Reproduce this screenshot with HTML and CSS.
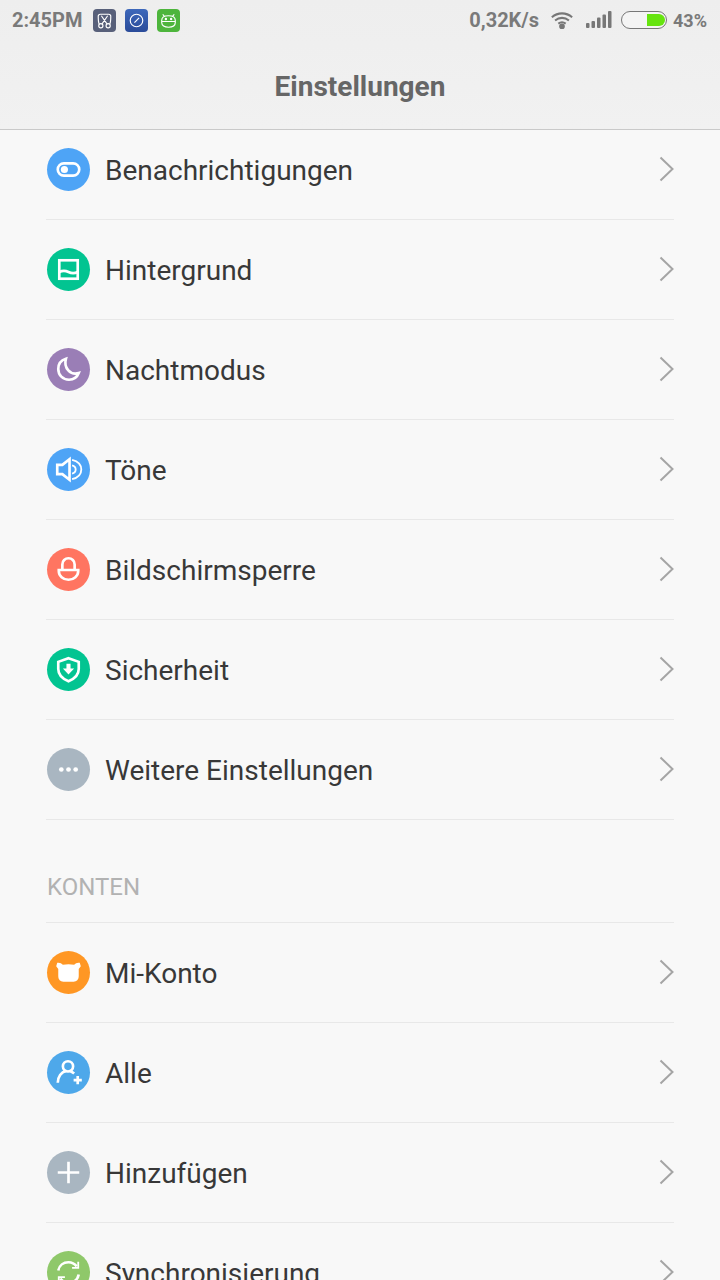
FILE: index.html

```html
<!DOCTYPE html>
<html lang="de">
<head>
    <meta charset="UTF-8">
    <meta name="viewport" content="width=device-width, initial-scale=1.0">
    <title>Einstellungen</title>
    <link rel="stylesheet" href="styles.css">
</head>
<body>
    <div class="top">
        <div class="status">
            <span class="time">2:45PM</span>
            <span class="app app-grey">
                <svg viewBox="0 0 22 22"><path d="M6 14.500C5 13 5 10 5 7c0-1.200.8-2 2-2h8c1.200 0 2 .8 2 2 0 3 0 6-1 7.500M8 6.500l5.500 8M14 6.500l-5.500 8"/><circle cx="7.500" cy="16" r="2"/><circle cx="14.500" cy="16" r="2"/></svg>
            </span>
            <span class="app app-blue">
                <svg viewBox="0 0 22 22"><circle cx="11" cy="11" r="6"/><path d="M9 13l4.500-4.500"/></svg>
            </span>
            <span class="app app-green">
                <svg viewBox="0 0 22 22"><path d="M5.500 5l1.500 2M16.500 5l-1.500 2M4.500 11c0-2.800 2.500-4.500 6.500-4.500s6.500 1.700 6.500 4.500v2c0 2.800-2.500 4.500-6.500 4.500s-6.500-1.700-6.500-4.500zM4.500 12h13"/><circle cx="8.500" cy="9.500" r=".6"/><circle cx="13.500" cy="9.500" r=".6"/></svg>
            </span>
            <span class="status-right">
                <span class="speed">0,32K/s</span>
                <svg class="wifi" viewBox="0 0 26 20"><path d="M2 7.500c6.500-5.500 15.500-5.500 22 0M5.500 11c4.500-3.700 10.500-3.700 15 0M9 14.500c2.500-1.800 5.500-1.800 8 0"/><circle cx="13" cy="17.500" r="2"/></svg>
                <svg class="signal" viewBox="0 0 26 17"><rect x="0" y="12" width="3.500" height="5" rx="1"/><rect x="5.500" y="10" width="3.500" height="7" rx="1"/><rect x="11" y="6.500" width="3.500" height="10.500" rx="1"/><rect x="16.500" y="3.500" width="3.500" height="13.500" rx="1"/><rect x="22" y="0" width="3.500" height="17" rx="1"/></svg>
                <span class="battery"><span class="battery-fill"></span></span>
                <span class="percent">43%</span>
            </span>
        </div>
        <h1 class="title">Einstellungen</h1>
    </div>

    <div class="list">
        <div class="row">
            <span class="icon c-blue">
                <svg viewBox="0 0 42 42"><rect x="10.500" y="15" width="21" height="12" rx="6" class="thick"/><circle cx="17" cy="21" r="3.500" class="solid"/></svg>
            </span>
            <span class="label">Benachrichtigungen</span>
            <svg class="chevron" viewBox="0 0 15 26"><path d="M1.500 1.500L13.500 13 1.500 24.500"/></svg>
        </div>
        <div class="row">
            <span class="icon c-green">
                <svg viewBox="0 0 42 42"><rect x="12" y="12" width="18" height="18" class="thick"/><path d="M12 23.500c3-1.500 6-1.500 9 0s6 1.500 9 0" class="thick"/></svg>
            </span>
            <span class="label">Hintergrund</span>
            <svg class="chevron" viewBox="0 0 15 26"><path d="M1.500 1.500L13.500 13 1.500 24.500"/></svg>
        </div>
        <div class="row">
            <span class="icon c-purple">
                <svg viewBox="0 0 42 42"><path d="M18.500 10.500C13.500 12 11 16 11 20.500c0 6 4.500 10.500 10.500 10.500 4.500 0 8-2.500 9.500-6.500-8 2.500-15-5-12.500-14z" class="thick"/></svg>
            </span>
            <span class="label">Nachtmodus</span>
            <svg class="chevron" viewBox="0 0 15 26"><path d="M1.500 1.500L13.500 13 1.500 24.500"/></svg>
        </div>
        <div class="row">
            <span class="icon c-blue">
                <svg viewBox="0 0 42 42"><path d="M10 16.500h5l7-5.500v20l-7-5.500h-5z" class="thick"/><path d="M24.500 11.500c6 1.500 9 5.500 9 9.500s-3 8-9 9.500M24.500 17c2 .5 3.500 2 3.500 4s-1.500 3.500-3.500 4" class="thin"/></svg>
            </span>
            <span class="label">Töne</span>
            <svg class="chevron" viewBox="0 0 15 26"><path d="M1.500 1.500L13.500 13 1.500 24.500"/></svg>
        </div>
        <div class="row">
            <span class="icon c-red">
                <svg viewBox="0 0 42 42"><path d="M15 21v-5a6 6 0 0 1 12 0v5" class="thick"/><path d="M11.500 21.500h19v1a9.500 8.500 0 0 1-19 0z" class="thick"/></svg>
            </span>
            <span class="label">Bildschirmsperre</span>
            <svg class="chevron" viewBox="0 0 15 26"><path d="M1.500 1.500L13.500 13 1.500 24.500"/></svg>
        </div>
        <div class="row">
            <span class="icon c-green">
                <svg viewBox="0 0 42 42"><path d="M21 10l10 3.500v7c0 5.500-4 9.500-10 12-6-2.500-10-6.500-10-12v-7z" class="thick"/><path d="M19 15.500h4v4.500h3.500L21 26l-5.500-6H19z" class="solid"/></svg>
            </span>
            <span class="label">Sicherheit</span>
            <svg class="chevron" viewBox="0 0 15 26"><path d="M1.500 1.500L13.500 13 1.500 24.500"/></svg>
        </div>
        <div class="row">
            <span class="icon c-grey">
                <svg viewBox="0 0 42 42"><circle cx="14" cy="21" r="2.300" class="solid"/><circle cx="21" cy="21" r="2.300" class="solid"/><circle cx="28" cy="21" r="2.300" class="solid"/></svg>
            </span>
            <span class="label">Weitere Einstellungen</span>
            <svg class="chevron" viewBox="0 0 15 26"><path d="M1.500 1.500L13.500 13 1.500 24.500"/></svg>
        </div>

        <div class="section">KONTEN</div>

        <div class="row">
            <span class="icon c-orange">
                <svg viewBox="0 0 42 42"><path d="M10 11.500c2.500-.5 4 .5 5.500 2 3.500-.7 7.500-.7 11 0 1.500-1.500 3-2.500 5.500-2l1 3.500-2 2.500v7c0 3.500-2 5.500-5 5.500H16c-3 0-5-2-5-5.500v-7l-2-2.500z" class="solid"/></svg>
            </span>
            <span class="label">Mi-Konto</span>
            <svg class="chevron" viewBox="0 0 15 26"><path d="M1.500 1.500L13.500 13 1.500 24.500"/></svg>
        </div>
        <div class="row">
            <span class="icon c-sky">
                <svg viewBox="0 0 42 42"><circle cx="20.500" cy="15" r="5" class="thick"/><path d="M10.500 31c0-6 3.500-10.500 8-11.500M23 20c1.500.5 2.500 1 3.500 2" class="thick"/><path d="M26 28.500h8M30 24.500v8" class="thick"/></svg>
            </span>
            <span class="label">Alle</span>
            <svg class="chevron" viewBox="0 0 15 26"><path d="M1.500 1.500L13.500 13 1.500 24.500"/></svg>
        </div>
        <div class="row">
            <span class="icon c-grey">
                <svg viewBox="0 0 42 42"><path d="M10.500 21h21M21 10.500v21" class="thick"/></svg>
            </span>
            <span class="label">Hinzufügen</span>
            <svg class="chevron" viewBox="0 0 15 26"><path d="M1.500 1.500L13.500 13 1.500 24.500"/></svg>
        </div>
        <div class="row">
            <span class="icon c-lime">
                <svg viewBox="0 0 42 42"><path d="M11 19c1-5 5-8 10-8 3 0 6 1.500 8 4M31 23c-1 5-5 8-10 8-3 0-6-1.500-8-4" class="thick"/><path d="M30.500 10.500v6h-6M11.500 31.500v-6h6" class="thin"/></svg>
            </span>
            <span class="label">Synchronisierung</span>
            <svg class="chevron" viewBox="0 0 15 26"><path d="M1.500 1.500L13.500 13 1.500 24.500"/></svg>
        </div>
    </div>
</body>
</html>
```

FILE: styles.css

```css
* {
    margin: 0;
    padding: 0;
    box-sizing: border-box;
}
html, body {
    height: 1280px;
    overflow: hidden;
}
body {
    background: #f8f8f8;
    font-family: Roboto, sans-serif;
}

/* header */
.top {
    position: relative;
    z-index: 2;
    height: 130px;
    background: linear-gradient(#eeeeee, #f1f1f1);
    border-bottom: 1px solid #c9c9c9;
}
.status {
    display: flex;
    align-items: center;
    height: 40px;
    padding: 0 12px;
    color: #7a7a7a;
    font-size: 20px;
    font-weight: 700;
}
.time {
    width: 81px;
}
.app {
    display: flex;
    width: 23px;
    height: 23px;
    margin-right: 9px;
    border-radius: 4px;
}
.app svg {
    width: 23px;
    height: 23px;
    fill: none;
    stroke: #fff;
    stroke-width: 1.1;
}
.app-grey { background: #58607a; }
.app-blue { background: linear-gradient(#3d68bb, #2a4b99); }
.app-green { background: #4db53c; }
.status-right {
    display: flex;
    align-items: center;
    margin-left: auto;
}
.speed {
    margin-right: 11px;
}
.wifi {
    width: 24px;
    height: 19px;
    margin-right: 12px;
    margin-bottom: 2px;
    fill: #777;
    stroke: #777;
    stroke-width: 2.200;
}
.wifi path {
    fill: none;
}
.signal {
    width: 26px;
    height: 17px;
    margin-right: 9px;
    margin-bottom: 1px;
    fill: #777;
}
.battery {
    display: flex;
    justify-content: flex-end;
    width: 46px;
    height: 18px;
    margin-right: 6px;
    padding: 1.500px;
    background: #f4f4f4;
    border: 1.500px solid #777;
    border-radius: 9px;
}
.battery-fill {
    width: 18px;
    height: 12px;
    background: #66e40f;
    border-radius: 0 6px 6px 0;
}
.percent {
    margin-right: 1px;
    font-size: 18px;
}
.title {
    height: 89px;
    padding-top: 2px;
    color: #666;
    font-size: 28px;
    font-weight: 700;
    line-height: 89px;
    text-align: center;
}

/* settings rows */
.list {
    margin: -10px 46px 0;
}
.row {
    display: flex;
    align-items: center;
    height: 100px;
    border-bottom: 1px solid #e8e8e8;
}
.icon {
    flex: none;
    width: 43px;
    height: 43px;
    margin-left: 1px;
    margin-right: 15px;
    border-radius: 50%;
}
.icon svg {
    display: block;
    width: 43px;
    height: 43px;
    fill: none;
    stroke: #fff;
}
.icon .thick { stroke-width: 2.600; }
.icon .thin { stroke-width: 1.800; }
.icon .solid {
    fill: #fff;
    stroke: none;
}
.c-blue { background: #4ea4f6; }
.c-green { background: #02c491; }
.c-purple { background: #9a7eb6; }
.c-red { background: #ff7561; }
.c-grey { background: #a9b6c1; }
.c-orange { background: #ff9724; }
.c-sky { background: #4ea8ea; }
.c-lime { background: #8fc86a; }
.label {
    flex: 1;
    padding-top: 2px;
    color: #383838;
    font-size: 28px;
}
.chevron {
    flex: none;
    width: 15px;
    height: 26px;
    margin-bottom: 2px;
    fill: none;
    stroke: #a5a5a5;
    stroke-width: 2;
}
.section {
    display: flex;
    align-items: center;
    height: 103px;
    padding: 32px 1px 0;
    color: #b2b2b2;
    font-size: 24px;
    border-bottom: 1px solid #e8e8e8;
}
```
